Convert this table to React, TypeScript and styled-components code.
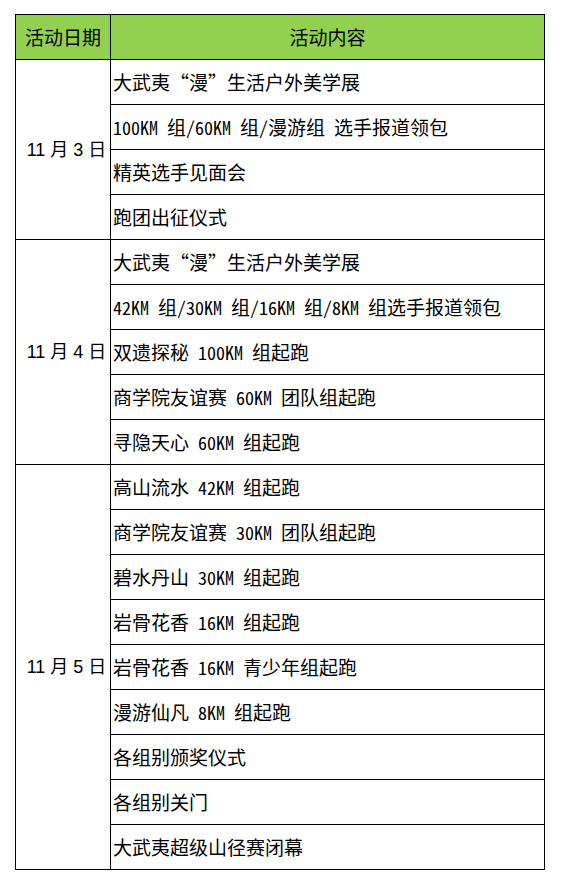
import React from 'react';
import styled, {createGlobalStyle} from "styled-components";

type Day = {
    date: string,
    items: string[],
}

const schedule: Day[] = [
    {
        date: '11 月 3 日',
        items: [
            '大武夷“漫”生活户外美学展',
            '100KM 组/60KM 组/漫游组 选手报道领包',
            '精英选手见面会',
            '跑团出征仪式',
        ],
    },
    {
        date: '11 月 4 日',
        items: [
            '大武夷“漫”生活户外美学展',
            '42KM 组/30KM 组/16KM 组/8KM 组选手报道领包',
            '双遗探秘 100KM 组起跑',
            '商学院友谊赛 60KM 团队组起跑',
            '寻隐天心 60KM 组起跑',
        ],
    },
    {
        date: '11 月 5 日',
        items: [
            '高山流水 42KM 组起跑',
            '商学院友谊赛 30KM 团队组起跑',
            '碧水丹山 30KM 组起跑',
            '岩骨花香 16KM 组起跑',
            '岩骨花香 16KM 青少年组起跑',
            '漫游仙凡 8KM 组起跑',
            '各组别颁奖仪式',
            '各组别关门',
            '大武夷超级山径赛闭幕',
        ],
    },
]

// latin runs are half width and a touch smaller, quotes are full width
const renderItem = (text: string) =>
    text.split(/([“”]|[\x20-\x7E]+)/).filter(Boolean).map((part, i) => {
        if (part === '“' || part === '”') return <Quote key={i}>{part}</Quote>
        if (/^[\x20-\x7E]+$/.test(part)) return <Latin key={i}>{part}</Latin>
        return part
    })

const App = (): JSX.Element => {
    return (
        <>
            <GlobalStyle />
            <Page>
                <ScheduleTable>
                    <colgroup>
                        <col style={{width: 95}} />
                        <col />
                    </colgroup>
                    <thead>
                        <tr>
                            <HeadCell>活动日期</HeadCell>
                            <HeadCell>活动内容</HeadCell>
                        </tr>
                    </thead>
                    <tbody>
                        {schedule.map(day =>
                            day.items.map((item, i) => (
                                <tr key={day.date + i}>
                                    {i === 0 && <DateCell rowSpan={day.items.length}>{day.date}</DateCell>}
                                    <ItemCell>{renderItem(item)}</ItemCell>
                                </tr>
                            ))
                        )}
                    </tbody>
                </ScheduleTable>
            </Page>
        </>
    );
}

// styles
const GlobalStyle = createGlobalStyle`
  body {
    margin: 0;
    background: #fff;
    font-family: "Noto Sans CJK SC", sans-serif;
  }
`

const Page = styled.div`
  padding: 14px 0 0 15px;
`

const ScheduleTable = styled.table`
  width: 530px;
  table-layout: fixed;
  border-collapse: collapse;
  color: #000;

  td, th {
    border: 1px solid #000;
    height: 44px;
    padding: 0;
    font-weight: 400;
    line-height: 20px;
    white-space: nowrap;
  }
`

const HeadCell = styled.th`
  background: #92d050;
  text-align: center;
  font-size: 19px;
  font-family: "Noto Sans CJK SC", sans-serif;
`

const DateCell = styled.td`
  text-align: center;
  padding-left: 7px !important;
  font-size: 18px;
  font-family: "Liberation Sans", "Noto Sans CJK SC", sans-serif;
`

const ItemCell = styled.td`
  text-align: left;
  padding-left: 2px !important;
  font-size: 19px;
  font-family: "Noto Sans Mono CJK SC", "Noto Sans CJK SC", monospace;
`

const Latin = styled.span`
  font-size: 18px;
`

const Quote = styled.span`
  display: inline-block;
  width: 1em;
  text-align: center;
  font-family: "Noto Sans CJK SC", sans-serif;
`

export default App;
